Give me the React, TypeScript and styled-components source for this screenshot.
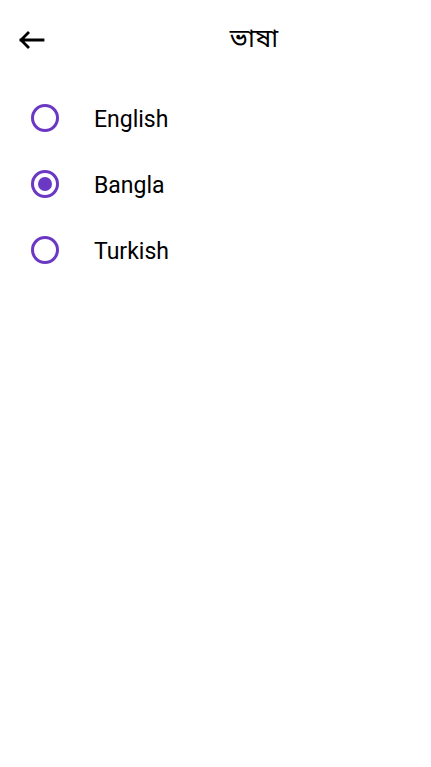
import React, { useState } from "react";
import styled, { createGlobalStyle } from "styled-components";

const languages = ["English", "Bangla", "Turkish"];

export default function App() {
  const [selected, setSelected] = useState("Bangla");

  return (
    <>
      <GlobalStyle />
      <Page>
        <AppBar>
          <BackButton aria-label="back">
            <svg width="28" height="18" viewBox="0 0 28 18">
              <path
                d="M4 9H26M11 2L4 9L11 16"
                fill="none"
                stroke="#000"
                strokeWidth="2.8"
                strokeLinecap="square"
              />
            </svg>
          </BackButton>
          <Title>ভাষা</Title>
        </AppBar>
        <List>
          {languages.map((lang) => (
            <Row key={lang} onClick={() => setSelected(lang)}>
              <Radio $checked={selected === lang} />
              <Label>{lang}</Label>
            </Row>
          ))}
        </List>
      </Page>
    </>
  );
}

const GlobalStyle = createGlobalStyle`
  body {
    margin: 0;
    background: #fff;
    font-family: Roboto, "Noto Sans", "Noto Sans Bengali", sans-serif;
  }
`;

const Page = styled.div`
  width: 431px;
  min-height: 767px;
  background: #fff;
`;

const AppBar = styled.div`
  display: flex;
  align-items: center;
  height: 80px;
`;

const BackButton = styled.button`
  width: 77px;
  height: 56px;
  padding: 0 0 0 17px;
  border: none;
  background: none;
  display: flex;
  align-items: center;
  cursor: pointer;
`;

const Title = styled.h1`
  flex: 1;
  margin: 0;
  text-align: center;
  font-size: 26px;
  font-weight: 400;
  color: #000;
`;

const List = styled.div`
  display: flex;
  flex-direction: column;
  padding-top: 5px;
`;

const Row = styled.div`
  display: flex;
  align-items: center;
  height: 66px;
  padding-left: 31px;
  cursor: pointer;
`;

const Radio = styled.span<{ $checked: boolean }>`
  box-sizing: border-box;
  width: 28px;
  height: 28px;
  border-radius: 50%;
  border: 3px solid #6a38c2;
  display: flex;
  align-items: center;
  justify-content: center;
  &::after {
    content: "";
    width: 14px;
    height: 14px;
    border-radius: 50%;
    background: #6a38c2;
    display: ${(p) => (p.$checked ? "block" : "none")};
  }
`;

const Label = styled.span`
  margin-left: 35px;
  padding-top: 2px;
  font-size: 23px;
  color: #000;
`;
